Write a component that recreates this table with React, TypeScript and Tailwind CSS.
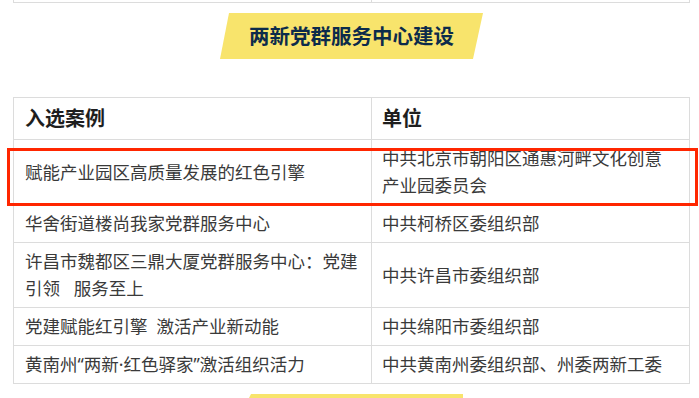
import React from "react";

const font = { fontFamily: '"Noto Sans", "Noto Sans CJK SC", sans-serif' };

const rows: { left: React.ReactNode; right: React.ReactNode; tall?: boolean }[] = [
  { left: "赋能产业园区高质量发展的红色引擎", right: "中共北京市朝阳区通惠河畔文化创意产业园委员会", tall: true },
  { left: "华舍街道楼尚我家党群服务中心", right: "中共柯桥区委组织部" },
  { left: "许昌市魏都区三鼎大厦党群服务中心：党建引领\u00a0\u00a0\u00a0服务至上", right: "中共许昌市委组织部", tall: true },
  { left: "党建赋能红引擎\u00a0\u00a0激活产业新动能", right: "中共绵阳市委组织部" },
  { left: "黄南州\u201c两新·红色驿家\u201d激活组织活力", right: "中共黄南州委组织部、州委两新工委" },
];

export default function App() {
  return (
    <div className="w-[699px] h-[398px] overflow-hidden bg-white" style={font}>
      <div className="ml-[13px] w-[677px]">
        {/* tail of previous table */}
        <div className="grid grid-cols-[358px_318px] border-l border-[#dcdcdc]">
          <div className="h-[3px] border-r border-b border-[#dcdcdc]" />
          <div className="h-[3px] border-r border-b border-[#dcdcdc]" />
        </div>

        {/* banner */}
        <div className="mt-[10px] flex justify-center">
          <div className="w-[263px] h-[46px] bg-[#f8e46c] flex items-center justify-center [clip-path:polygon(9px_0,100%_0,calc(100%-10px)_100%,0_100%)]">
            <span className="text-[20.5px] font-bold text-[#0c2b4b] leading-none">两新党群服务中心建设</span>
          </div>
        </div>

        {/* table */}
        <div className="relative mt-[38px] border-l border-t border-[#dcdcdc] text-[17.5px] text-[#3a3a3a]">
          <div className="grid grid-cols-[358px_318px]">
            <div className="h-[42px] flex items-center pl-[11px] border-r border-b border-[#dcdcdc] font-bold text-[20px] text-[#1e1e1e]">入选案例</div>
            <div className="h-[42px] flex items-center pl-[10px] border-r border-b border-[#dcdcdc] font-bold text-[20px] text-[#1e1e1e]">单位</div>
            {rows.map((r, i) => (
              <React.Fragment key={i}>
                <div className={`${r.tall ? "h-[65px]" : "h-[38px]"} flex items-center pl-[11px] pr-[8px] py-[5px] leading-[27px] border-r border-b border-[#dcdcdc]`}>
                  <span>{r.left}</span>
                </div>
                <div className={`${r.tall ? "h-[65px]" : "h-[38px]"} flex items-center pl-[10px] pr-[20px] py-[5px] leading-[27px] border-r border-b border-[#dcdcdc]`}>
                  <span>{r.right}</span>
                </div>
              </React.Fragment>
            ))}
          </div>
          <div className="absolute left-[-7px] right-[-8px] top-[50px] h-[58px] border-[3px] border-[#ff2600] pointer-events-none" />
        </div>

        {/* next banner top */}
        <div className="mt-[10px] ml-[236px] w-[214px] h-[4px] bg-[#f8e46c] [clip-path:polygon(2px_0,100%_0,100%_100%,0_100%)]" />
      </div>
    </div>
  );
}
